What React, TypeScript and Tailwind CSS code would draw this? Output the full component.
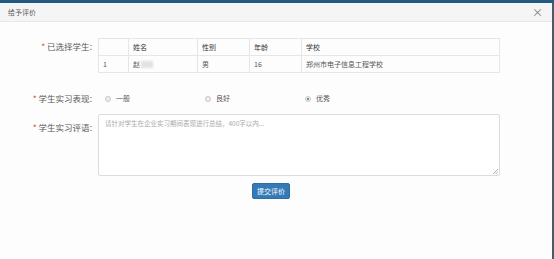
import React from 'react';

const FONT = { fontFamily: '"Noto Sans CJK SC", "Liberation Sans", sans-serif' };

const COLUMNS = ['', '姓名', '性别', '年龄', '学校'];
const COL_WIDTHS = ['w-[29px]', 'w-[69px]', 'w-[52px]', 'w-[52px]', 'flex-1'];

const LEVELS = [
  { value: 'normal', label: '一般' },
  { value: 'good', label: '良好' },
  { value: 'excellent', label: '优秀' },
];

function FieldLabel({ text }: { text: string }) {
  return (
    <div className="w-[92px] shrink-0 text-right text-[8.5px] leading-[17px] text-[#5a5a5a]">
      <span className="text-[#d9534f] mr-[2px]">*</span>
      {text}:
    </div>
  );
}

function StudentTable() {
  return (
    <div className="w-[402px] border border-[#e6e6e6] text-[7px] text-[#555]">
      <div className="flex h-[17px] border-b border-[#e6e6e6]">
        {COLUMNS.map((c, i) => (
          <div
            key={i}
            className={`${COL_WIDTHS[i]} flex items-center px-[4px] text-[#333] ${i > 0 ? 'border-l border-[#e6e6e6]' : ''}`}
          >
            {c}
          </div>
        ))}
      </div>
      <div className="flex h-[16px]">
        <div className="w-[29px] flex items-center px-[4px]">1</div>
        <div className="w-[69px] flex items-center px-[4px] border-l border-[#e6e6e6]">
          赵
          <span className="ml-[1px] inline-block w-[12px] h-[7px] bg-[#e2e2e2] blur-[1px]" />
        </div>
        <div className="w-[52px] flex items-center px-[4px] border-l border-[#e6e6e6]">男</div>
        <div className="w-[52px] flex items-center px-[4px] border-l border-[#e6e6e6]">16</div>
        <div className="flex-1 flex items-center px-[4px] border-l border-[#e6e6e6]">郑州市电子信息工程学校</div>
      </div>
    </div>
  );
}

export default function App() {
  const selected = 'excellent';

  return (
    <div className="w-[554px] h-[259px] flex flex-col bg-white overflow-hidden" style={FONT}>
      <div className="h-[3px] bg-[#245a80]" />
      <div className="flex flex-1">
        <div className="flex-1 flex flex-col">
          <div className="h-[19px] flex items-center justify-between px-[8px] bg-[#f5f5f5] border-b border-[#e8e8e8]">
            <span className="text-[7px] text-[#555]">给予评价</span>
            <span className="text-[11px] leading-none text-[#777] mr-[1px]">×</span>
          </div>

          <div className="flex-1 bg-[#fdfdfd] pt-[16px]">
            <div className="flex gap-[6px]">
              <FieldLabel text="已选择学生" />
              <StudentTable />
            </div>

            <div className="flex gap-[6px] mt-[17px]">
              <FieldLabel text="学生实习表现" />
              <div className="flex text-[7px] text-[#555]">
                {LEVELS.map((l) => (
                  <label key={l.value} className="w-[100px] flex items-center h-[17px] pl-[7px]">
                    <span className="w-[6px] h-[6px] rounded-full border border-[#c8c8c8] bg-[#eee] flex items-center justify-center mr-[5px]">
                      {selected === l.value && <span className="w-[2px] h-[2px] rounded-full bg-[#666]" />}
                    </span>
                    {l.label}
                  </label>
                ))}
              </div>
            </div>

            <div className="flex gap-[6px] mt-[7px]">
              <div className="pt-[5px]">
                <FieldLabel text="学生实习评语" />
              </div>
              <div className="relative w-[402px] h-[62px] border border-[#dcdcdc] rounded-[2px] bg-white px-[6px] py-[4px] text-[6.5px] text-[#aaa]">
                请针对学生在企业实习期间表现进行总结，400字以内...
                <svg className="absolute right-[1px] bottom-[1px]" width="5" height="5" viewBox="0 0 5 5">
                  <path d="M5 0L0 5M5 2.5L2.5 5" stroke="#999" strokeWidth="0.8" />
                </svg>
              </div>
            </div>

            <div className="flex justify-center mt-[7px] pr-[10px]">
              <button className="h-[16px] px-[4px] rounded-[2px] bg-[#337ab7] border border-[#2e6da4] text-white text-[7px]">
                提交评价
              </button>
            </div>
          </div>
        </div>
        <div className="w-[2px] bg-[#4a5a6a]" />
      </div>
    </div>
  );
}
